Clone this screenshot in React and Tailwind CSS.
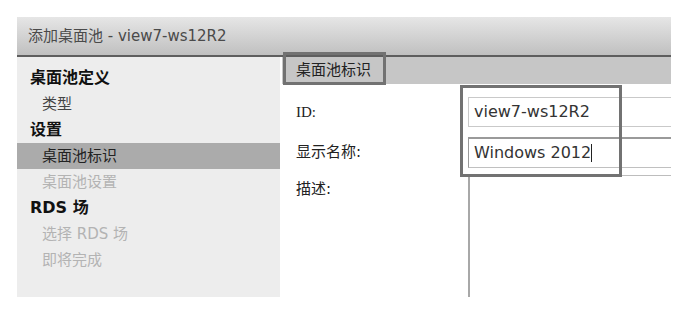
export default function App() {
  const cjk = { fontFamily: '"DejaVu Sans", "Noto Sans CJK SC", sans-serif' }
  const items = [
    { label: '桌面池定义', kind: 'head' },
    { label: '类型', kind: 'item' },
    { label: '设置', kind: 'head' },
    { label: '桌面池标识', kind: 'active' },
    { label: '桌面池设置', kind: 'off' },
    { label: 'RDS 场', kind: 'head' },
    { label: '选择 RDS 场', kind: 'off' },
    { label: '即将完成', kind: 'off' },
  ]

  const rowClass = kind => {
    if (kind === 'head') return 'pl-[13px] text-[16px] font-bold text-[#111]'
    if (kind === 'active') return 'pl-[25px] text-[15px] text-[#222] bg-[#ababab]'
    if (kind === 'off') return 'pl-[25px] text-[15px] text-[#b3b3b3]'
    return 'pl-[25px] text-[15px] text-[#444]'
  }

  return (
    <div className="w-[690px] h-[335px] bg-white pt-[17px] pl-[17px]" style={cjk}>
      <div className="w-[654px] h-[280px] flex flex-col">
        <div className="h-[40px] shrink-0 flex items-center pl-[11px] bg-gradient-to-b from-[#e6e6e6] to-[#c0c0c0] border-b-2 border-[#5e5e5e] text-[15px] text-[#4a4a4a]">
          添加桌面池 - view7-ws12R2
        </div>

        <div className="flex flex-1 min-h-0">
          <div className="w-[263px] shrink-0 bg-[#ededed] pt-[8px]">
            {items.map(it => (
              <div key={it.label} className={`h-[26px] flex items-center ${rowClass(it.kind)}`}>
                {it.label}
              </div>
            ))}
          </div>

          <div className="flex-1 ml-[2px] bg-white relative overflow-hidden">
            <div className="h-[27px] bg-[#c6c6c6] flex items-center pl-[14px] text-[15px] text-[#222]">
              桌面池标识
            </div>

            <div className="grid grid-cols-[172px_1fr] pl-[14px] pt-[13px]">
              <div className="h-[30px] flex items-center text-[15px] text-[#222]" style={{ fontFamily: '"Liberation Serif", "Noto Sans CJK SC", serif' }}>ID:</div>
              <div className="h-[30px] border border-r-0 border-[#c9c9c9] flex items-center pl-[5px] text-[16px] text-[#333]">view7-ws12R2</div>

              <div className="h-[31px] mt-[10px] flex items-center text-[15px] text-[#222]">显示名称:</div>
              <div className="h-[31px] mt-[10px] border border-r-0 border-t-2 border-[#9a9a9a] border-b-[#c0c0c0] flex items-center pl-[5px] text-[16px] text-[#333]">
                Windows 2012<span className="inline-block w-px h-[18px] bg-[#222]"></span>
              </div>

              <div className="h-[28px] mt-[6px] flex items-start pt-[4px] text-[15px] text-[#222]">描述:</div>
              <div className="h-[130px] mt-[7px] border-t border-l-2 border-[#bdbdbd] border-l-[#a8a8a8]"></div>
            </div>

            <div className="absolute left-[178px] top-[28px] w-[162px] h-[92px] border-[3px] border-[#727272]"></div>
          </div>
        </div>
      </div>

      <div className="absolute left-[283px] top-[52px] w-[103px] h-[33px] border-[3px] border-[#727272]"></div>
    </div>
  )
}
